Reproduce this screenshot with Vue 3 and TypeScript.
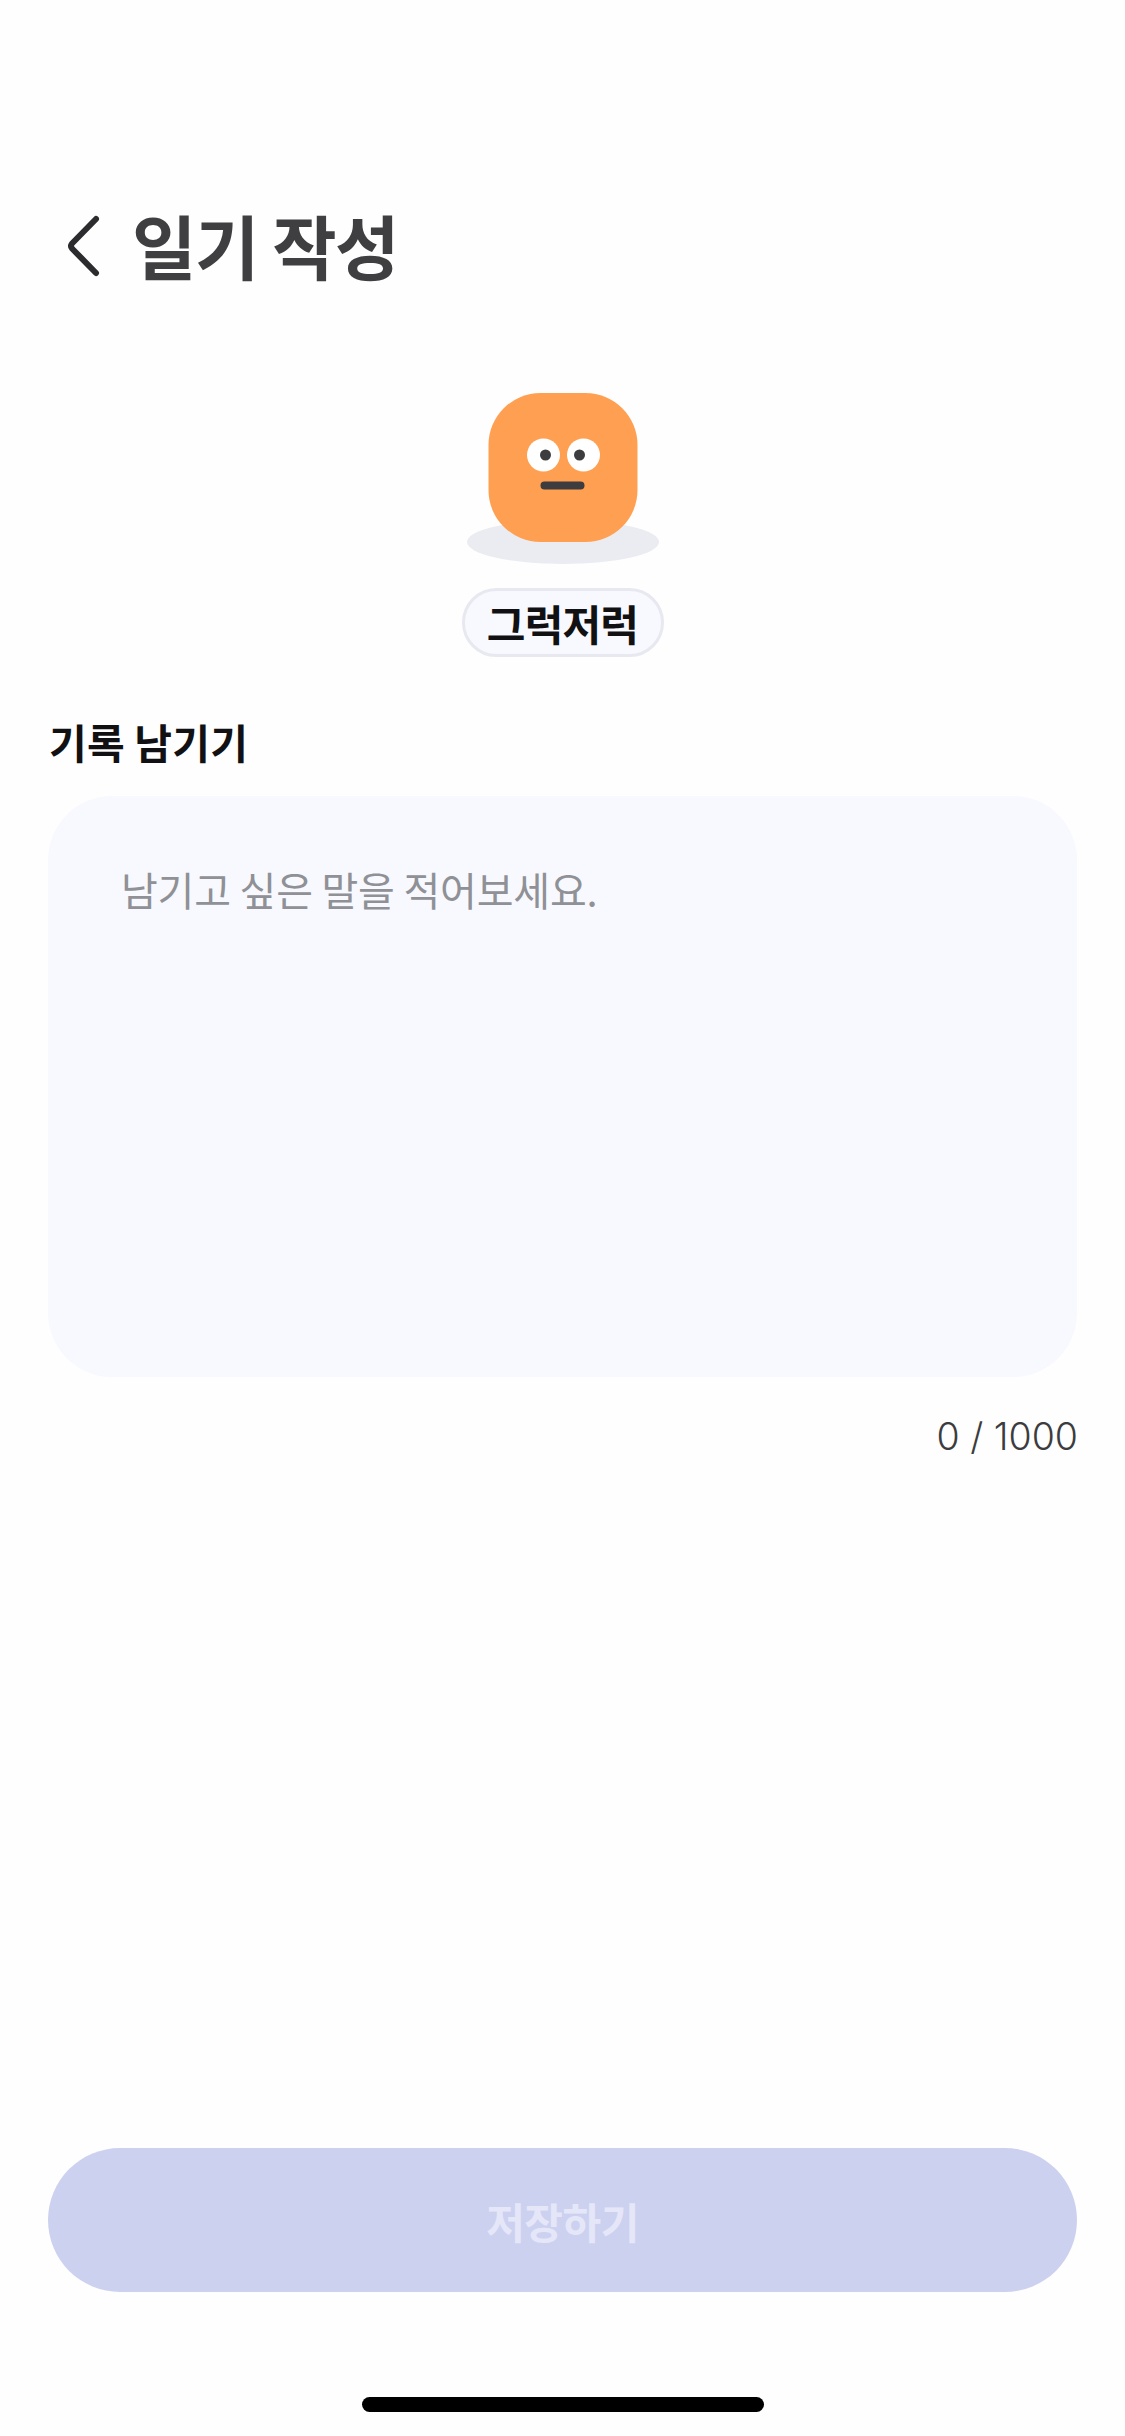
<script setup lang="ts">
const title = '일기 작성'
const mood = '그럭저럭'
const label = '기록 남기기'
const placeholder = '남기고 싶은 말을 적어보세요.'
const count = '0 / 1000'
const save = '저장하기'
</script>

<template>
  <main class="page">
    <header class="top">
      <svg class="back" viewBox="0 0 72 72" aria-hidden="true">
        <path d="M48 10 L24 34.5 Q22 37 24 39.5 L48 64" fill="none" stroke="#2c2c2e" stroke-width="6" stroke-linecap="round" stroke-linejoin="round" />
      </svg>
      <h1 class="title">{{ title }}</h1>
    </header>

    <section class="mood">
      <svg class="face" viewBox="0 0 192 171" aria-hidden="true">
        <ellipse cx="96" cy="149" rx="96" ry="22" fill="#ebecf2" />
        <rect x="21.5" y="0" width="149" height="149" rx="52" fill="#ff9f51" />
        <circle cx="76.5" cy="62" r="16.5" fill="#fff" />
        <circle cx="116.5" cy="62" r="16.5" fill="#fff" />
        <circle cx="78.5" cy="62" r="5.5" fill="#3d3d3f" />
        <circle cx="112.5" cy="62" r="5.5" fill="#3d3d3f" />
        <rect x="73.5" y="88.5" width="44" height="8" rx="4" fill="#3d3d3f" />
      </svg>
      <span class="pill">{{ mood }}</span>
    </section>

    <section class="form">
      <h2 class="label">{{ label }}</h2>
      <div class="box">
        <p class="hint">{{ placeholder }}</p>
      </div>
      <p class="count">{{ count }}</p>
    </section>

    <button class="save" type="button">{{ save }}</button>
    <div class="home-row"><span class="home"></span></div>
  </main>
</template>

<style scoped>
.page {
  box-sizing: border-box;
  width: 1125px;
  height: 2436px;
  display: flex;
  flex-direction: column;
  background: #fefefe;
  font-family: "Noto Sans CJK KR", "Noto Sans", sans-serif;
  overflow: hidden;
}
.top {
  display: flex;
  align-items: center;
  gap: 12px;
  padding: 209px 48px 0;
  height: 72px;
  box-sizing: content-box;
}
.back {
  width: 72px;
  height: 72px;
  flex: none;
}
.title {
  margin: 0;
  font-size: 70px;
  line-height: 72px;
  font-weight: 700;
  color: #3f3f41;
  letter-spacing: -1.5px;
}
.mood {
  display: flex;
  flex-direction: column;
  align-items: center;
  margin-top: 112px;
}
.face {
  width: 192px;
  height: 171px;
  display: block;
}
.pill {
  box-sizing: border-box;
  margin-top: 24px;
  width: 202px;
  height: 69px;
  display: flex;
  align-items: center;
  justify-content: center;
  border: 3px solid #e7e8f0;
  border-radius: 35px;
  background: #f8f9fe;
  color: #111113;
  font-size: 42px;
  font-weight: 700;
  line-height: 1;
  letter-spacing: -0.8px;
}
.form {
  display: flex;
  flex-direction: column;
  padding: 0 48px;
}
.label {
  margin: 54px 0 0 1px;
  font-size: 41px;
  line-height: 60px;
  font-weight: 700;
  color: #111113;
  letter-spacing: 0.2px;
}
.box {
  box-sizing: border-box;
  margin-top: 25px;
  height: 581px;
  border-radius: 64px;
  background: #f8f9fe;
  padding: 68px 62px 0 62px;
}
.hint {
  margin: 0 0 0 11px;
  font-size: 40px;
  line-height: 50px;
  font-weight: 400;
  color: #8f9196;
  letter-spacing: -0.2px;
}
.count {
  margin: 36px -1px 0 0;
  text-align: right;
  font-family: "Inter", "Noto Sans", sans-serif;
  font-size: 37.5px;
  line-height: 48px;
  font-weight: 300;
  color: #3c3c3e;
}
.save {
  margin: auto 48px 0;
  height: 144px;
  flex: none;
  border: 0;
  border-radius: 72px;
  background: #cdd1f0;
  color: #e5e7f8;
  font-family: inherit;
  font-size: 42px;
  font-weight: 700;
  letter-spacing: -0.5px;
}
.home-row {
  display: flex;
  justify-content: center;
  padding: 105px 0 24px;
}
.home {
  width: 402px;
  height: 15px;
  border-radius: 8px;
  background: #000;
}
</style>

<style>
body {
  margin: 0;
  background: #fefefe;
}
</style>
